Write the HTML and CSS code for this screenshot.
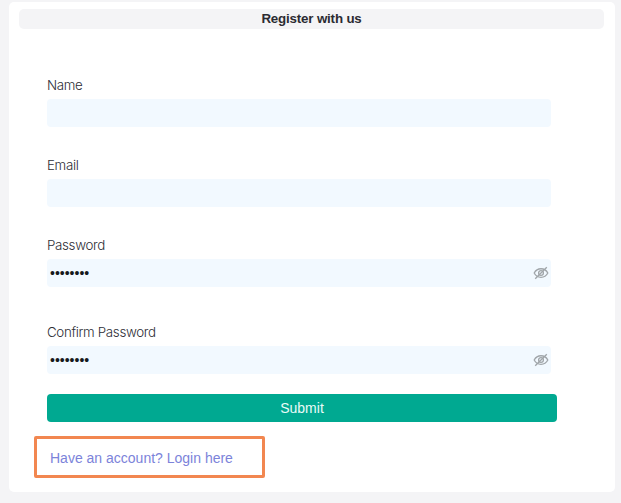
FILE: index.html
```html
<!DOCTYPE html>
<html lang="en">
<head>
<meta charset="utf-8">
<title>Register with us</title>
<link rel="stylesheet" href="styles.css">
</head>
<body>
<main class="card">
  <h1 class="title">Register with us</h1>
  <form class="form">
    <div class="field">
      <label class="label">Name</label>
      <div class="control"></div>
    </div>
    <div class="field">
      <label class="label">Email</label>
      <div class="control"></div>
    </div>
    <div class="field secret">
      <label class="label">Password</label>
      <div class="control"><span class="dots">••••••••</span>
        <svg class="eye" viewBox="0 0 16 14"><path d="M1.2 7C4.2 1.3 11.8 1.3 14.8 7 11.8 12.7 4.2 12.7 1.2 7Z"/><circle cx="8" cy="7" r="2.4"/><path d="M2.2 12.8 13.8 1.2"/></svg>
      </div>
    </div>
    <div class="field confirm">
      <label class="label">Confirm Password</label>
      <div class="control"><span class="dots">••••••••</span>
        <svg class="eye" viewBox="0 0 16 14"><path d="M1.2 7C4.2 1.3 11.8 1.3 14.8 7 11.8 12.7 4.2 12.7 1.2 7Z"/><circle cx="8" cy="7" r="2.4"/><path d="M2.2 12.8 13.8 1.2"/></svg>
      </div>
    </div>
    <button class="submit" type="button">Submit</button>
  </form>
  <a class="login">Have an account? Login here</a>
</main>
</body>
</html>
```
FILE: styles.css
```css
* { box-sizing: border-box; }
body {
  margin: 0;
  padding: 2px 6px 11px 9px;
  background: #f4f4f6;
  font-family: "Liberation Sans", sans-serif;
}
.card {
  height: 490px;
  padding: 7px 11px 0 10px;
  background: #fff;
  border-radius: 5px;
}
.title {
  height: 20px;
  margin: 0;
  border-radius: 5px;
  background: #f4f4f6;
  color: #2b2b31;
  font-size: 13.33px;
  letter-spacing: -0.17px;
  line-height: 19px;
  text-align: center;
}
.form {
  display: flex;
  flex-direction: column;
  padding: 47px 47px 0 28px;
}
.field {
  width: 504px;
  height: 80px;
}
.secret { height: 87px; }
.confirm { height: 71px; }
.label {
  display: block;
  height: 23px;
  color: #2e2e36;
  font-family: Inter, sans-serif;
  font-size: 13.33px;
  font-weight: 300;
  letter-spacing: -0.33px;
  line-height: 18px;
  white-space: nowrap;
}
.control {
  display: flex;
  align-items: center;
  justify-content: space-between;
  height: 28px;
  padding: 0 2px 0 3px;
  border-radius: 4px;
  background: #f2f9ff;
}
.dots {
  color: #17191c;
  font-size: 14px;
  line-height: 28px;
}
.eye {
  width: 16px;
  height: 14px;
  fill: none;
  stroke: #a0a5a9;
  stroke-width: 1.3;
}
.submit {
  width: 510px;
  height: 28px;
  padding: 0;
  border: 0;
  border-radius: 4px;
  background: #00a991;
  color: #e9fbf8;
  font: 14px/28px "Liberation Sans", sans-serif;
}
.login {
  display: flex;
  align-items: center;
  width: 231px;
  height: 42px;
  margin: 14px 0 0 15px;
  padding: 2px 0 0 13px;
  border: 3px solid #f28750;
  border-radius: 2px;
  color: #7c83da;
  font-size: 14px;
  line-height: 20px;
}
```
